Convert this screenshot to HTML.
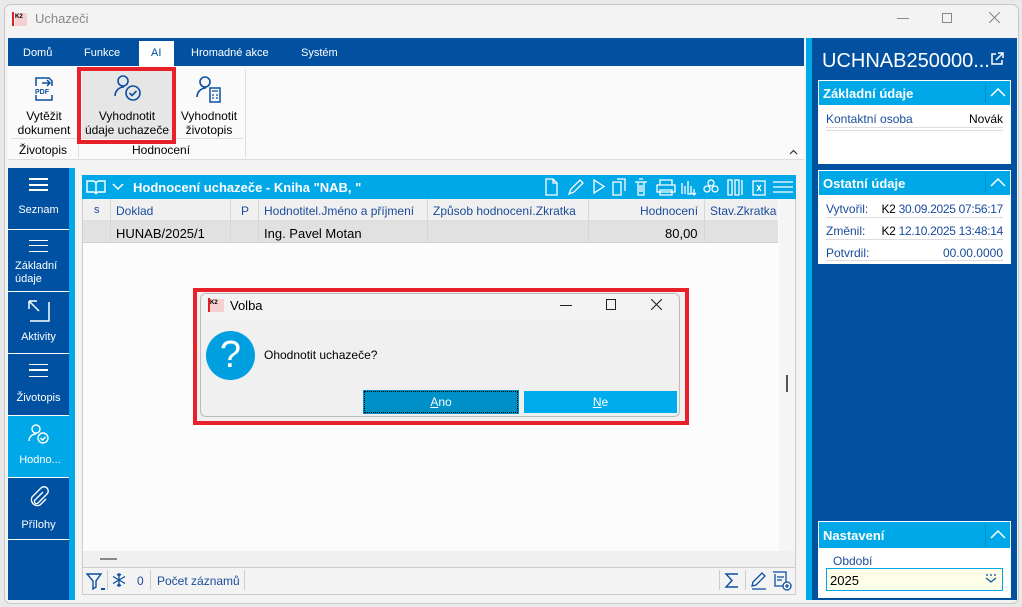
<!DOCTYPE html>
<html><head><meta charset="utf-8"><style>
*{box-sizing:border-box;margin:0;padding:0}
body{width:1022px;height:607px;background:#e9e9e9;font-family:"Liberation Sans",sans-serif;font-size:12px;position:relative;overflow:hidden}
.a{position:absolute}
.win{left:4px;top:4px;width:1015px;height:600px;background:#f3f3f3;border:1px solid #c8c8c8;border-radius:7px}
.t{white-space:nowrap}
.si{position:absolute;left:8px;width:61px;border-bottom:1px solid #fff;color:#fff;text-align:center;font-size:11px}
.hdr{background:#00a8e8;color:#fff;font-weight:bold;font-size:13px}
.lbl{color:#1a4b9c}
.r{text-align:right}
</style></head><body>
<div class="a win"></div>
<!-- title -->
<div class="a" style="left:12px;top:12px;width:2px;height:14px;background:#e02020"></div>
<div class="a t" style="left:15px;top:13px;font-size:6px;font-weight:bold;background:#f4d0d0;width:12px;height:13px;line-height:8px">K2</div>
<div class="a t" style="left:35px;top:11px;font-size:13px;color:#888">Uchazeči</div>
<div class="a" style="left:897px;top:18px;width:12px;height:1px;background:#888"></div>
<div class="a" style="left:942px;top:13px;width:10px;height:10px;border:1px solid #888"></div>
<svg class="a" style="left:989px;top:12px" width="11" height="11" viewBox="0 0 11 11"><path d="M0 0L11 11M11 0L0 11" stroke="#888" stroke-width="1.1"/></svg>
<!-- tabs -->
<div class="a" style="left:8px;top:38px;width:796px;height:28px;background:#0251a1"></div>
<div class="a" style="left:139px;top:41px;width:35px;height:25px;background:#fff"></div>
<div class="a t" style="left:23px;top:47px;color:#fff;font-size:11px">Domů</div>
<div class="a t" style="left:84px;top:47px;color:#fff;font-size:11px">Funkce</div>
<div class="a t" style="left:151px;top:47px;color:#0251a1;font-size:11px">AI</div>
<div class="a t" style="left:191px;top:47px;color:#fff;font-size:11px">Hromadné akce</div>
<div class="a t" style="left:301px;top:47px;color:#fff;font-size:11px">Systém</div>
<!-- ribbon -->
<div class="a" style="left:8px;top:66px;width:796px;height:94px;background:#fafafa;border-bottom:1px solid #ddd"></div>
<div class="a" style="left:11px;top:138px;width:232px;height:1px;background:#ddd"></div>
<div class="a" style="left:78px;top:70px;width:1px;height:88px;background:#ddd"></div>
<div class="a" style="left:245px;top:70px;width:1px;height:88px;background:#ddd"></div>
<div class="a" style="left:82px;top:70px;width:90px;height:68px;background:#e6e6e6"></div>
<div class="a" style="left:77px;top:67px;width:99px;height:77px;border:4px solid #e8202a"></div>
<svg class="a" style="left:33px;top:76px" width="22" height="26" viewBox="0 0 22 26"><path d="M3 10V2h13l3 3v5M3 19v5h16v-5" fill="none" stroke="#0b4fa0" stroke-width="1.5"/><path d="M9 7h8M14 4l3 3-3 3" fill="none" stroke="#0b4fa0" stroke-width="1.5"/><text x="2" y="18" font-size="7" font-weight="bold" fill="#0b4fa0" font-family="Liberation Sans">PDF</text></svg>
<svg class="a" style="left:113px;top:74px" width="30" height="28" viewBox="0 0 30 28"><circle cx="10" cy="7" r="5" fill="none" stroke="#0b4fa0" stroke-width="1.6"/><path d="M2 22c0-5 4-9 9-9" fill="none" stroke="#0b4fa0" stroke-width="1.6"/><circle cx="20" cy="19" r="7" fill="none" stroke="#0b4fa0" stroke-width="1.6"/><path d="M16.5 19l2.5 2.5 4.5-4.5" fill="none" stroke="#0b4fa0" stroke-width="1.6"/></svg>
<svg class="a" style="left:196px;top:76px" width="28" height="28" viewBox="0 0 28 28"><circle cx="9" cy="6" r="5" fill="none" stroke="#0b4fa0" stroke-width="1.6"/><path d="M1 21c0-5 4-9 9-9" fill="none" stroke="#0b4fa0" stroke-width="1.6"/><rect x="14" y="12" width="10" height="14" fill="none" stroke="#0b4fa0" stroke-width="1.5"/><path d="M16 15h6M16 19h2M20 19h2M16 22h2M20 22h2" stroke="#0b4fa0" stroke-width="1.3"/></svg>
<div class="a" style="left:8px;top:109px;width:72px;text-align:center;line-height:14px">Vytěžit<br>dokument</div>
<div class="a" style="left:82px;top:109px;width:90px;text-align:center;line-height:14px">Vyhodnotit<br>údaje uchazeče</div>
<div class="a" style="left:176px;top:109px;width:66px;text-align:center;line-height:14px">Vyhodnotit<br>životopis</div>
<div class="a t" style="left:19px;top:143px">Životopis</div>
<div class="a t" style="left:132px;top:143px">Hodnocení</div>
<svg class="a" style="left:789px;top:149px" width="9" height="6" viewBox="0 0 9 6"><path d="M1 5l3.5-3.5L8 5" fill="none" stroke="#333" stroke-width="1.2"/></svg>
<!-- left sidebar -->
<div class="a" style="left:8px;top:168px;width:61px;height:432px;background:#0051a2"></div>
<div class="a" style="left:69px;top:168px;width:6px;height:432px;background:#00a8e8"></div>
<div class="si" style="top:168px;height:62px"><div style="margin:10px auto 0;width:19px;height:13px;border-top:2px solid #fff;border-bottom:2px solid #fff;position:relative"><div style="position:absolute;top:4px;left:0;width:19px;height:1.5px;background:#fff"></div></div><div style="margin-top:13px">Seznam</div></div>
<div class="si" style="top:230px;height:62px"><div style="margin:10px auto 0;width:19px;height:12px;border-top:1.5px solid #fff;border-bottom:1.5px solid #fff;position:relative"><div style="position:absolute;top:3.5px;left:0;width:19px;height:1.5px;background:#fff"></div></div><div style="margin-top:8px;text-align:left;padding-left:7px;line-height:13px">Základní<br>údaje</div></div>
<div class="si" style="top:292px;height:62px"><svg style="margin-top:8px" width="22" height="22" viewBox="0 0 22 22"><path d="M1 1h8M1 1v8M1 1l10 10M21 2v19H2" fill="none" stroke="#fff" stroke-width="1.5"/></svg><div style="margin-top:6px">Aktivity</div></div>
<div class="si" style="top:354px;height:62px"><div style="margin:10px auto 0;width:19px;height:13px;border-top:1.5px solid #fff;border-bottom:1.5px solid #fff;position:relative"><div style="position:absolute;top:4px;left:0;width:19px;height:1.5px;background:#fff"></div></div><div style="margin-top:15px">Životopis</div></div>
<div class="si" style="top:416px;height:62px;background:#00a8e8"><svg style="margin-top:8px" width="22" height="20" viewBox="0 0 22 20"><circle cx="8" cy="5" r="4" fill="none" stroke="#fff" stroke-width="1.4"/><path d="M1 17c0-4 3-7 7-7" fill="none" stroke="#fff" stroke-width="1.4"/><circle cx="15" cy="14" r="5" fill="none" stroke="#fff" stroke-width="1.4"/><path d="M12.5 14l2 2 3-3" fill="none" stroke="#fff" stroke-width="1.4"/></svg><div style="margin-top:7px;padding-left:3px">Hodno...</div></div>
<div class="si" style="top:478px;height:62px"><svg style="margin-top:8px" width="20" height="22" viewBox="0 0 20 22"><path d="M14 6l-8 8a2 2 0 0 0 3 3l9-9a4 4 0 0 0-6-6L3 11a6 6 0 0 0 8 8l6-6" fill="none" stroke="#fff" stroke-width="1.4"/></svg><div style="margin-top:8px">Přílohy</div></div>
<!-- grid -->
<div class="a" style="left:82px;top:175px;width:714px;height:420px;background:#fcfcfc;border:1px solid #ccc"></div>
<div class="a hdr" style="left:82px;top:175px;width:714px;height:24px"></div>
<svg class="a" style="left:86px;top:179px" width="20" height="17" viewBox="0 0 20 17"><path d="M1 2h6a3 3 0 0 1 3 3v10a3 3 0 0 0-3-2H1zM19 2h-6a3 3 0 0 0-3 3v10a3 3 0 0 1 3-2h6z" fill="none" stroke="#fff" stroke-width="1.4"/></svg>
<svg class="a" style="left:112px;top:183px" width="12" height="8" viewBox="0 0 12 8"><path d="M1 1l5 5 5-5" fill="none" stroke="#fff" stroke-width="1.5"/></svg>
<div class="a t" style="left:133px;top:180px;color:#fff;font-weight:bold;font-size:13px">Hodnocení uchazeče - Kniha "NAB, "</div>
<svg class="a" style="left:543px;top:177px" width="253" height="20" viewBox="0 0 253 20" fill="none" stroke="#fff" stroke-width="1.3">
<path d="M3 2h7l4 4v12H3zM10 2v4h4"/>
<path d="M26 17l2-5 9-9 3 3-9 9z"/>
<path d="M51 3v13l10-6.5z"/>
<path d="M70 5h8v13h-8zM74 2h8v12"/>
<path d="M92 5h12M95 5v13h6V5M96 2h4M97 8v7M99 8v7"/>
<path d="M114 8h18v7h-18zM117 8V3h12v5M117 13h12v5h-12z"/>
<path d="M139 6v11M142 9v8M145 4v13h3V9M151 12v6M149 16l2 2 2-2"/>
<circle cx="168" cy="6" r="3"/><circle cx="164" cy="12" r="3"/><circle cx="172" cy="12" r="3"/>
<path d="M185 3h4v15h-4zM192 3h4v15h-4zM199 3v15"/>
<path d="M210 4h12v14h-12zM214 8l4 6M218 8l-4 6"/>
<path d="M230 5h20M230 10h20M230 15h20"/>
</svg>
<div class="a" style="left:83px;top:199px;width:695px;height:22px;background:#f0f0f0;border-bottom:1px solid #ddd"></div>
<div class="a" style="left:83px;top:221px;width:695px;height:22px;background:#e1e1e1;border-bottom:1px solid #d0d0d0"></div>
<div class="a" style="left:110px;top:199px;width:1px;height:44px;background:#d6d6d6"></div>
<div class="a" style="left:230px;top:199px;width:1px;height:44px;background:#d6d6d6"></div>
<div class="a" style="left:258px;top:199px;width:1px;height:44px;background:#d6d6d6"></div>
<div class="a" style="left:427px;top:199px;width:1px;height:44px;background:#d6d6d6"></div>
<div class="a" style="left:588px;top:199px;width:1px;height:44px;background:#d6d6d6"></div>
<div class="a" style="left:704px;top:199px;width:1px;height:44px;background:#d6d6d6"></div>
<div class="a t lbl" style="left:94px;top:204px;font-size:11px">s</div>
<div class="a t lbl" style="left:116px;top:204px">Doklad</div>
<div class="a t lbl" style="left:241px;top:204px">P</div>
<div class="a t lbl" style="left:264px;top:204px">Hodnotitel.Jméno a příjmení</div>
<div class="a t lbl" style="left:433px;top:204px">Způsob hodnocení.Zkratka</div>
<div class="a t lbl" style="left:640px;top:204px">Hodnocení</div>
<div class="a t lbl" style="left:710px;top:204px">Stav.Zkratka</div>
<div class="a t" style="left:116px;top:226px;font-size:13px">HUNAB/2025/1</div>
<div class="a t" style="left:264px;top:226px;font-size:13px">Ing. Pavel Motan</div>
<div class="a t" style="left:665px;top:226px;font-size:13px">80,00</div>
<div class="a" style="left:779px;top:199px;width:16px;height:354px;background:#f5f5f5"></div>
<div class="a" style="left:786px;top:375px;width:2px;height:17px;background:#555"></div>
<div class="a" style="left:83px;top:551px;width:712px;height:16px;background:#f0f0f0"></div>
<div class="a" style="left:100px;top:558px;width:17px;height:2px;background:#888"></div>
<div class="a" style="left:83px;top:567px;width:712px;height:27px;background:#f3f3f3;border-top:1px solid #ccc"></div>
<svg class="a" style="left:86px;top:572px" width="20" height="20" viewBox="0 0 20 20" fill="none" stroke="#0b4fa0" stroke-width="1.4"><path d="M1 2h14l-5 7v6l-3 2V9z"/><path d="M15 17h4" stroke-width="2"/></svg>
<svg class="a" style="left:111px;top:572px" width="16" height="16" viewBox="0 0 16 16" fill="none" stroke="#0b4fa0" stroke-width="1.3"><path d="M8 1v14M2 4.5l12 7M2 11.5l12-7M6 2l2 2 2-2M6 14l2-2 2 2"/></svg>
<div class="a t lbl" style="left:137px;top:574px">0</div>
<div class="a t lbl" style="left:157px;top:574px">Počet záznamů</div>
<div class="a" style="left:107px;top:570px;width:1px;height:20px;background:#ccc"></div>
<div class="a" style="left:150px;top:570px;width:1px;height:20px;background:#ccc"></div>
<div class="a" style="left:244px;top:570px;width:1px;height:20px;background:#ccc"></div>
<div class="a" style="left:719px;top:570px;width:1px;height:20px;background:#ccc"></div>
<div class="a" style="left:745px;top:570px;width:1px;height:20px;background:#ccc"></div>
<svg class="a" style="left:724px;top:572px" width="16" height="17" viewBox="0 0 16 17" fill="none" stroke="#0b4fa0" stroke-width="1.4"><path d="M14 2H2l6 6.5L2 15h12"/></svg>
<svg class="a" style="left:750px;top:572px" width="18" height="18" viewBox="0 0 18 18" fill="none" stroke="#0b4fa0" stroke-width="1.3"><path d="M2 14l1-4 9-9 3 3-9 9zM2 17h14"/></svg>
<svg class="a" style="left:772px;top:571px" width="20" height="20" viewBox="0 0 20 20" fill="none" stroke="#0b4fa0" stroke-width="1.3"><path d="M1 1h13v11M3 3v12h8M5 6h7M5 9h5"/><circle cx="15" cy="15" r="4" fill="#fff"/><path d="M15 13v4M13 15h4"/></svg>
<!-- splitter -->
<div class="a" style="left:806px;top:38px;width:6px;height:562px;background:#00a8e8"></div>
<!-- right panel -->
<div class="a" style="left:812px;top:38px;width:205px;height:562px;background:#0251a1"></div>
<div class="a t" style="left:822px;top:50px;color:#fff;font-size:20px">UCHNAB250000...</div>
<svg class="a" style="left:990px;top:52px" width="14" height="14" viewBox="0 0 14 14"><path d="M6 2H2v10h10V8M8 1h5v5M13 1L6 8" fill="none" stroke="#fff" stroke-width="1.5"/></svg>
<div class="a" style="left:818px;top:80px;width:193px;height:84px;background:#fff"></div>
<div class="a hdr" style="left:819px;top:81px;width:191px;height:24px;padding:5px 0 0 4px">Základní údaje</div>
<div class="a" style="left:985px;top:83px;width:1px;height:20px;background:#0090cc"></div>
<svg class="a" style="left:990px;top:88px" width="16" height="9" viewBox="0 0 16 9"><path d="M1 8l7-7 7 7" fill="none" stroke="#fff" stroke-width="1.5"/></svg>
<div class="a t lbl" style="left:826px;top:112px">Kontaktní osoba</div>
<div class="a t" style="left:969px;top:112px">Novák</div>
<div class="a" style="left:826px;top:127px;width:177px;height:1px;background:#ddd"></div>
<div class="a" style="left:826px;top:130px;width:177px;height:1px;background:#ddd"></div>
<div class="a" style="left:818px;top:170px;width:193px;height:94px;background:#fff"></div>
<div class="a hdr" style="left:819px;top:171px;width:191px;height:24px;padding:5px 0 0 4px">Ostatní údaje</div>
<div class="a" style="left:985px;top:173px;width:1px;height:20px;background:#0090cc"></div>
<svg class="a" style="left:990px;top:178px" width="16" height="9" viewBox="0 0 16 9"><path d="M1 8l7-7 7 7" fill="none" stroke="#fff" stroke-width="1.5"/></svg>
<div class="a t lbl" style="left:826px;top:202px">Vytvořil:</div>
<div class="a t r" style="left:860px;width:143px;top:202px;letter-spacing:-0.3px">K2 <span class="lbl">30.09.2025 07:56:17</span></div>
<div class="a t lbl" style="left:826px;top:224px">Změnil:</div>
<div class="a t r" style="left:860px;width:143px;top:224px;letter-spacing:-0.3px">K2 <span class="lbl">12.10.2025 13:48:14</span></div>
<div class="a t lbl" style="left:826px;top:246px">Potvrdil:</div>
<div class="a t lbl r" style="left:900px;width:103px;top:246px">00.00.0000</div>
<div class="a" style="left:826px;top:217px;width:177px;height:1px;background:#ddd"></div>
<div class="a" style="left:826px;top:239px;width:177px;height:1px;background:#ddd"></div>
<div class="a" style="left:826px;top:260px;width:177px;height:1px;background:#ddd"></div>
<div class="a" style="left:818px;top:521px;width:193px;height:77px;background:#fff"></div>
<div class="a hdr" style="left:819px;top:522px;width:191px;height:26px;padding:6px 0 0 4px">Nastavení</div>
<div class="a" style="left:985px;top:524px;width:1px;height:22px;background:#0090cc"></div>
<svg class="a" style="left:990px;top:530px" width="16" height="9" viewBox="0 0 16 9"><path d="M1 8l7-7 7 7" fill="none" stroke="#fff" stroke-width="1.5"/></svg>
<div class="a t lbl" style="left:833px;top:554px">Období</div>
<div class="a" style="left:826px;top:568px;width:177px;height:23px;background:#fdfde8;border:1px solid #00a8e8"></div>
<div class="a t" style="left:830px;top:573px;font-size:13px">2025</div>
<svg class="a" style="left:985px;top:574px" width="12" height="9" viewBox="0 0 12 9" fill="none" stroke="#0b4fa0" stroke-width="1.2"><path d="M1 1h2M5 1h2M9 1h2M1 4l5 4 5-4"/></svg>
<!-- dialog -->
<div class="a" style="left:193px;top:288px;width:496px;height:137px;border:4px solid #e8202a;background:#f0f0f0"></div>
<div class="a" style="left:200px;top:293px;width:480px;height:124px;background:#f0f0f0;border:1px solid #bbb;border-radius:6px"></div>
<div class="a" style="left:201px;top:294px;width:478px;height:27px;background:#f3f3f3;border-radius:6px 6px 0 0"></div>
<div class="a" style="left:208px;top:298px;width:2px;height:14px;background:#e02020"></div>
<div class="a" style="left:210px;top:299px;width:14px;height:13px;background:#f4d0d0;font-size:6px;font-weight:bold;line-height:8px">K2</div>
<div class="a t" style="left:230px;top:298px;font-size:13px">Volba</div>
<div class="a" style="left:560px;top:305px;width:12px;height:1px;background:#222"></div>
<div class="a" style="left:606px;top:299px;width:10px;height:11px;border:1px solid #222"></div>
<svg class="a" style="left:651px;top:299px" width="11" height="11" viewBox="0 0 11 11"><path d="M0 0L11 11M11 0L0 11" stroke="#222" stroke-width="1.1"/></svg>
<div class="a" style="left:206px;top:331px;width:49px;height:49px;border-radius:50%;background:#009fe0;color:#fff;text-align:center;font-size:38px;line-height:48px">?</div>
<div class="a t" style="left:264px;top:348px">Ohodnotit uchazeče?</div>
<div class="a" style="left:364px;top:391px;width:154px;height:22px;background:#0090c8;border:1px dotted #000;outline:1px solid #0090c8;color:#fff;text-align:center;line-height:20px"><u>A</u>no</div>
<div class="a" style="left:524px;top:391px;width:153px;height:22px;background:#00aced;color:#fff;text-align:center;line-height:22px"><u>N</u>e</div>
</body></html>
